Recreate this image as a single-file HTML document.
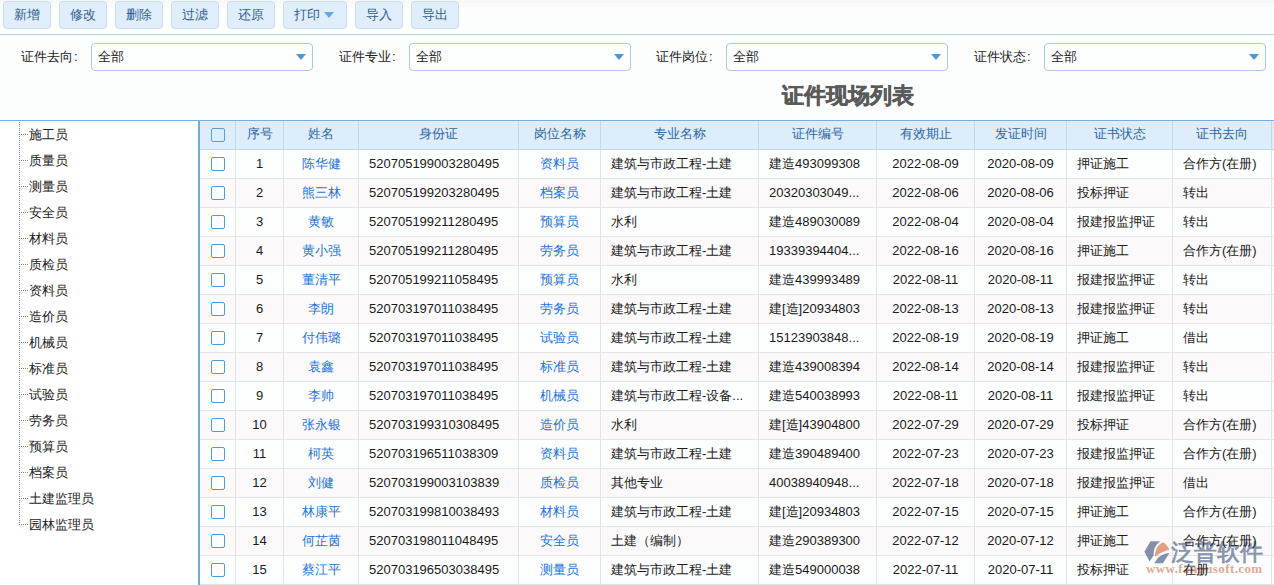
<!DOCTYPE html>
<html><head><meta charset="utf-8"><style>
*{box-sizing:border-box;margin:0;padding:0}
html,body{width:1274px;height:585px;overflow:hidden}
body{position:relative;background:#fcfdfd;font-family:"Liberation Sans",sans-serif;font-size:13px;color:#1a1a1a}
.a{position:absolute}
.topg{left:0;top:0;width:1274px;height:34px;background:linear-gradient(#f6f6f6 0px,#f6f6f6 3px,#f9f9f9 3px,#fafafa 7px,#fcfdfd 7px)}
.sep{left:0;top:34px;width:1274px;height:1px;background:#b2cfe6}
.btn{top:1px;height:28px;border:1px solid #c6dcef;border-radius:4px;background:#e0edfa;color:#2f5e8c;line-height:26px;text-align:center;white-space:nowrap}
.tri{display:inline-block;width:0;height:0;border-left:5px solid transparent;border-right:5px solid transparent;border-top:6px solid #6da6d9;vertical-align:middle;margin-left:4px;position:relative;top:-1px}
.lbl{top:43px;line-height:28px;color:#222;white-space:nowrap}
.sel{top:43px;width:222px;height:28px;border:1px solid #a9c9e6;border-radius:4px;background:#fdfefe;line-height:26px;padding-left:6px;color:#222}
.sel i{position:absolute;right:6px;top:10px;width:0;height:0;border-left:5px solid transparent;border-right:5px solid transparent;border-top:6px solid #4a97dc}
.title{left:782px;top:81px;font-size:22px;font-weight:bold;color:#5a5a5a;white-space:nowrap;line-height:30px;-webkit-text-stroke:0.5px #5a5a5a}
.tline{left:0;top:120px;width:1274px;height:1px;background:#72b0e4}
.tree{left:0;top:121px;width:198px;height:464px;background:#fff}
.vdot{left:19px;top:122px;width:1px;height:403px;background:repeating-linear-gradient(#8a8a8a 0 1px,transparent 1px 2px)}
.hdot{width:9px;height:1px;background:repeating-linear-gradient(90deg,#8a8a8a 0 1px,transparent 1px 2px)}
.ti{left:29px;line-height:16px;color:#222;white-space:nowrap}
.lb{left:198px;top:121px;width:2px;height:464px;background:#6aace4}
.hdr{left:200px;top:121px;width:1074px;height:28px;background:#deedfb}
.hb{left:200px;top:149px;width:1074px;height:1px;background:#c3d9ec}
.row{left:200px;width:1074px;height:28px;background:#fdfefe}
.row.e{background:#fbf9f9}
.hl{left:200px;width:1074px;height:1px;background:#e4e4e4}
.vl{width:1px}
.c{white-space:nowrap;overflow:hidden;line-height:27px;height:28px}
.h{color:#2d66a6;text-align:center}
.b{color:#1d74de}
.cb{width:14px;height:14px;border:1px solid #4e9ce0;border-radius:2px;background:#fdfefe}
.cbh{background:transparent;border-color:#5a9cd6}
</style></head><body>
<div class="a topg"></div>
<div class="a sep"></div>

<div class="a btn" style="left:3px;width:48px">新增</div>
<div class="a btn" style="left:59px;width:48px">修改</div>
<div class="a btn" style="left:115px;width:48px">删除</div>
<div class="a btn" style="left:171px;width:48px">过滤</div>
<div class="a btn" style="left:227px;width:48px">还原</div>
<div class="a btn" style="left:283px;width:64px;padding-right:3px">打印<span class="tri"></span></div>
<div class="a btn" style="left:355px;width:48px">导入</div>
<div class="a btn" style="left:411px;width:48px">导出</div>
<div class="a lbl" style="left:21px">证件去向<span style="margin-left:1px">:</span></div>
<div class="a sel" style="left:91px">全部<i></i></div>
<div class="a lbl" style="left:339px">证件专业<span style="margin-left:1px">:</span></div>
<div class="a sel" style="left:409px">全部<i></i></div>
<div class="a lbl" style="left:656px">证件岗位<span style="margin-left:1px">:</span></div>
<div class="a sel" style="left:726px">全部<i></i></div>
<div class="a lbl" style="left:974px">证件状态<span style="margin-left:1px">:</span></div>
<div class="a sel" style="left:1044px">全部<i></i></div>
<div class="a title">证件现场列表</div>
<div class="a tline"></div>
<div class="a tree"></div>
<div class="a vdot"></div>
<div class="a hdot" style="left:19px;top:134px"></div>
<div class="a ti" style="top:127px">施工员</div>
<div class="a hdot" style="left:19px;top:160px"></div>
<div class="a ti" style="top:153px">质量员</div>
<div class="a hdot" style="left:19px;top:186px"></div>
<div class="a ti" style="top:179px">测量员</div>
<div class="a hdot" style="left:19px;top:212px"></div>
<div class="a ti" style="top:205px">安全员</div>
<div class="a hdot" style="left:19px;top:238px"></div>
<div class="a ti" style="top:231px">材料员</div>
<div class="a hdot" style="left:19px;top:264px"></div>
<div class="a ti" style="top:257px">质检员</div>
<div class="a hdot" style="left:19px;top:290px"></div>
<div class="a ti" style="top:283px">资料员</div>
<div class="a hdot" style="left:19px;top:316px"></div>
<div class="a ti" style="top:309px">造价员</div>
<div class="a hdot" style="left:19px;top:342px"></div>
<div class="a ti" style="top:335px">机械员</div>
<div class="a hdot" style="left:19px;top:368px"></div>
<div class="a ti" style="top:361px">标准员</div>
<div class="a hdot" style="left:19px;top:394px"></div>
<div class="a ti" style="top:387px">试验员</div>
<div class="a hdot" style="left:19px;top:420px"></div>
<div class="a ti" style="top:413px">劳务员</div>
<div class="a hdot" style="left:19px;top:446px"></div>
<div class="a ti" style="top:439px">预算员</div>
<div class="a hdot" style="left:19px;top:472px"></div>
<div class="a ti" style="top:465px">档案员</div>
<div class="a hdot" style="left:19px;top:498px"></div>
<div class="a ti" style="top:491px">土建监理员</div>
<div class="a hdot" style="left:19px;top:524px"></div>
<div class="a ti" style="top:517px">园林监理员</div>
<div class="a hdr"></div>
<div class="a lb"></div>
<div class="a hb"></div>
<div class="a row" style="top:150px"></div>
<div class="a hl" style="top:178px"></div>
<div class="a row e" style="top:179px"></div>
<div class="a hl" style="top:207px"></div>
<div class="a row" style="top:208px"></div>
<div class="a hl" style="top:236px"></div>
<div class="a row e" style="top:237px"></div>
<div class="a hl" style="top:265px"></div>
<div class="a row" style="top:266px"></div>
<div class="a hl" style="top:294px"></div>
<div class="a row e" style="top:295px"></div>
<div class="a hl" style="top:323px"></div>
<div class="a row" style="top:324px"></div>
<div class="a hl" style="top:352px"></div>
<div class="a row e" style="top:353px"></div>
<div class="a hl" style="top:381px"></div>
<div class="a row" style="top:382px"></div>
<div class="a hl" style="top:410px"></div>
<div class="a row e" style="top:411px"></div>
<div class="a hl" style="top:439px"></div>
<div class="a row" style="top:440px"></div>
<div class="a hl" style="top:468px"></div>
<div class="a row e" style="top:469px"></div>
<div class="a hl" style="top:497px"></div>
<div class="a row" style="top:498px"></div>
<div class="a hl" style="top:526px"></div>
<div class="a row e" style="top:527px"></div>
<div class="a hl" style="top:555px"></div>
<div class="a row" style="top:556px"></div>
<div class="a hl" style="top:584px"></div>
<div class="a vl" style="left:235px;top:121px;height:28px;background:#c3d9ec"></div>
<div class="a vl" style="left:235px;top:150px;height:435px;background:#e4e4e4"></div>
<div class="a vl" style="left:283px;top:121px;height:28px;background:#c3d9ec"></div>
<div class="a vl" style="left:283px;top:150px;height:435px;background:#e4e4e4"></div>
<div class="a vl" style="left:358px;top:121px;height:28px;background:#c3d9ec"></div>
<div class="a vl" style="left:358px;top:150px;height:435px;background:#e4e4e4"></div>
<div class="a vl" style="left:518px;top:121px;height:28px;background:#c3d9ec"></div>
<div class="a vl" style="left:518px;top:150px;height:435px;background:#e4e4e4"></div>
<div class="a vl" style="left:600px;top:121px;height:28px;background:#c3d9ec"></div>
<div class="a vl" style="left:600px;top:150px;height:435px;background:#e4e4e4"></div>
<div class="a vl" style="left:758px;top:121px;height:28px;background:#c3d9ec"></div>
<div class="a vl" style="left:758px;top:150px;height:435px;background:#e4e4e4"></div>
<div class="a vl" style="left:876px;top:121px;height:28px;background:#c3d9ec"></div>
<div class="a vl" style="left:876px;top:150px;height:435px;background:#e4e4e4"></div>
<div class="a vl" style="left:974px;top:121px;height:28px;background:#c3d9ec"></div>
<div class="a vl" style="left:974px;top:150px;height:435px;background:#e4e4e4"></div>
<div class="a vl" style="left:1066px;top:121px;height:28px;background:#c3d9ec"></div>
<div class="a vl" style="left:1066px;top:150px;height:435px;background:#e4e4e4"></div>
<div class="a vl" style="left:1172px;top:121px;height:28px;background:#c3d9ec"></div>
<div class="a vl" style="left:1172px;top:150px;height:435px;background:#e4e4e4"></div>
<div class="a vl" style="left:1271px;top:121px;height:28px;background:#c3d9ec"></div>
<div class="a vl" style="left:1271px;top:150px;height:435px;background:#e4e4e4"></div>
<div class="a cb cbh" style="left:211px;top:128px"></div>
<div class="a c h" style="left:236px;top:120px;width:47px">序号</div>
<div class="a c h" style="left:284px;top:120px;width:74px">姓名</div>
<div class="a c h" style="left:359px;top:120px;width:159px">身份证</div>
<div class="a c h" style="left:519px;top:120px;width:81px">岗位名称</div>
<div class="a c h" style="left:601px;top:120px;width:157px">专业名称</div>
<div class="a c h" style="left:759px;top:120px;width:117px">证件编号</div>
<div class="a c h" style="left:877px;top:120px;width:97px">有效期止</div>
<div class="a c h" style="left:975px;top:120px;width:91px">发证时间</div>
<div class="a c h" style="left:1067px;top:120px;width:105px">证书状态</div>
<div class="a c h" style="left:1173px;top:120px;width:98px">证书去向</div>
<svg class="a" style="left:1138px;top:536px" width="136" height="49" viewBox="0 0 136 49">
<path d="M6.4,15.7 L12.5,5.2 L22.1,5.2 C17.4,8.7 15.1,14.5 15.7,19.2 L11.6,25.6 Z" fill="#6d7d9e" fill-opacity="0.85"/>
<path d="M16.9,20.9 C16.9,14.5 19.2,8.1 25.6,6.4 C28.5,8.7 30.8,11.6 31.4,14 C26.2,14.5 20.3,18 16.9,20.9 Z" fill="#da926e" fill-opacity="0.85"/>
<path d="M16.3,27.3 L25,27.3 L31.4,16.9 C26.2,17.4 21.5,19.8 19.2,22.7 Z" fill="#6d7d9e" fill-opacity="0.85"/>
</svg>
<div class="a" style="left:1171px;top:536px;font-size:23px;line-height:32px;color:#8693ad;white-space:nowrap;-webkit-text-stroke:0.7px #8693ad">泛普软件</div>
<div class="a" style="left:1146px;top:561px;font-family:'Liberation Serif',serif;font-size:13px;font-weight:bold;line-height:16px;color:#e3a994;white-space:nowrap;letter-spacing:0.4px">www.fanpusoft.com</div>
<div class="a cb" style="left:211px;top:157px"></div>
<div class="a c" style="left:236px;top:150px;width:47px;text-align:center;">1</div>
<div class="a c b" style="left:284px;top:150px;width:74px;text-align:center;">陈华健</div>
<div class="a c" style="left:359px;top:150px;width:159px;padding-left:10px;">520705199003280495</div>
<div class="a c b" style="left:519px;top:150px;width:81px;text-align:center;">资料员</div>
<div class="a c" style="left:601px;top:150px;width:157px;padding-left:10px;">建筑与市政工程-土建</div>
<div class="a c" style="left:759px;top:150px;width:117px;padding-left:10px;">建造493099308</div>
<div class="a c" style="left:877px;top:150px;width:97px;text-align:center;">2022-08-09</div>
<div class="a c" style="left:975px;top:150px;width:91px;text-align:center;">2020-08-09</div>
<div class="a c" style="left:1067px;top:150px;width:105px;padding-left:10px;">押证施工</div>
<div class="a c" style="left:1173px;top:150px;width:98px;padding-left:10px;">合作方(在册)</div>
<div class="a cb" style="left:211px;top:186px"></div>
<div class="a c" style="left:236px;top:179px;width:47px;text-align:center;">2</div>
<div class="a c b" style="left:284px;top:179px;width:74px;text-align:center;">熊三林</div>
<div class="a c" style="left:359px;top:179px;width:159px;padding-left:10px;">520705199203280495</div>
<div class="a c b" style="left:519px;top:179px;width:81px;text-align:center;">档案员</div>
<div class="a c" style="left:601px;top:179px;width:157px;padding-left:10px;">建筑与市政工程-土建</div>
<div class="a c" style="left:759px;top:179px;width:117px;padding-left:10px;">20320303049...</div>
<div class="a c" style="left:877px;top:179px;width:97px;text-align:center;">2022-08-06</div>
<div class="a c" style="left:975px;top:179px;width:91px;text-align:center;">2020-08-06</div>
<div class="a c" style="left:1067px;top:179px;width:105px;padding-left:10px;">投标押证</div>
<div class="a c" style="left:1173px;top:179px;width:98px;padding-left:10px;">转出</div>
<div class="a cb" style="left:211px;top:215px"></div>
<div class="a c" style="left:236px;top:208px;width:47px;text-align:center;">3</div>
<div class="a c b" style="left:284px;top:208px;width:74px;text-align:center;">黄敏</div>
<div class="a c" style="left:359px;top:208px;width:159px;padding-left:10px;">520705199211280495</div>
<div class="a c b" style="left:519px;top:208px;width:81px;text-align:center;">预算员</div>
<div class="a c" style="left:601px;top:208px;width:157px;padding-left:10px;">水利</div>
<div class="a c" style="left:759px;top:208px;width:117px;padding-left:10px;">建造489030089</div>
<div class="a c" style="left:877px;top:208px;width:97px;text-align:center;">2022-08-04</div>
<div class="a c" style="left:975px;top:208px;width:91px;text-align:center;">2020-08-04</div>
<div class="a c" style="left:1067px;top:208px;width:105px;padding-left:10px;">报建报监押证</div>
<div class="a c" style="left:1173px;top:208px;width:98px;padding-left:10px;">转出</div>
<div class="a cb" style="left:211px;top:244px"></div>
<div class="a c" style="left:236px;top:237px;width:47px;text-align:center;">4</div>
<div class="a c b" style="left:284px;top:237px;width:74px;text-align:center;">黄小强</div>
<div class="a c" style="left:359px;top:237px;width:159px;padding-left:10px;">520705199211280495</div>
<div class="a c b" style="left:519px;top:237px;width:81px;text-align:center;">劳务员</div>
<div class="a c" style="left:601px;top:237px;width:157px;padding-left:10px;">建筑与市政工程-土建</div>
<div class="a c" style="left:759px;top:237px;width:117px;padding-left:10px;">19339394404...</div>
<div class="a c" style="left:877px;top:237px;width:97px;text-align:center;">2022-08-16</div>
<div class="a c" style="left:975px;top:237px;width:91px;text-align:center;">2020-08-16</div>
<div class="a c" style="left:1067px;top:237px;width:105px;padding-left:10px;">押证施工</div>
<div class="a c" style="left:1173px;top:237px;width:98px;padding-left:10px;">合作方(在册)</div>
<div class="a cb" style="left:211px;top:273px"></div>
<div class="a c" style="left:236px;top:266px;width:47px;text-align:center;">5</div>
<div class="a c b" style="left:284px;top:266px;width:74px;text-align:center;">董清平</div>
<div class="a c" style="left:359px;top:266px;width:159px;padding-left:10px;">520705199211058495</div>
<div class="a c b" style="left:519px;top:266px;width:81px;text-align:center;">预算员</div>
<div class="a c" style="left:601px;top:266px;width:157px;padding-left:10px;">水利</div>
<div class="a c" style="left:759px;top:266px;width:117px;padding-left:10px;">建造439993489</div>
<div class="a c" style="left:877px;top:266px;width:97px;text-align:center;">2022-08-11</div>
<div class="a c" style="left:975px;top:266px;width:91px;text-align:center;">2020-08-11</div>
<div class="a c" style="left:1067px;top:266px;width:105px;padding-left:10px;">报建报监押证</div>
<div class="a c" style="left:1173px;top:266px;width:98px;padding-left:10px;">转出</div>
<div class="a cb" style="left:211px;top:302px"></div>
<div class="a c" style="left:236px;top:295px;width:47px;text-align:center;">6</div>
<div class="a c b" style="left:284px;top:295px;width:74px;text-align:center;">李朗</div>
<div class="a c" style="left:359px;top:295px;width:159px;padding-left:10px;">520703197011038495</div>
<div class="a c b" style="left:519px;top:295px;width:81px;text-align:center;">劳务员</div>
<div class="a c" style="left:601px;top:295px;width:157px;padding-left:10px;">建筑与市政工程-土建</div>
<div class="a c" style="left:759px;top:295px;width:117px;padding-left:10px;">建[造]20934803</div>
<div class="a c" style="left:877px;top:295px;width:97px;text-align:center;">2022-08-13</div>
<div class="a c" style="left:975px;top:295px;width:91px;text-align:center;">2020-08-13</div>
<div class="a c" style="left:1067px;top:295px;width:105px;padding-left:10px;">报建报监押证</div>
<div class="a c" style="left:1173px;top:295px;width:98px;padding-left:10px;">转出</div>
<div class="a cb" style="left:211px;top:331px"></div>
<div class="a c" style="left:236px;top:324px;width:47px;text-align:center;">7</div>
<div class="a c b" style="left:284px;top:324px;width:74px;text-align:center;">付伟璐</div>
<div class="a c" style="left:359px;top:324px;width:159px;padding-left:10px;">520703197011038495</div>
<div class="a c b" style="left:519px;top:324px;width:81px;text-align:center;">试验员</div>
<div class="a c" style="left:601px;top:324px;width:157px;padding-left:10px;">建筑与市政工程-土建</div>
<div class="a c" style="left:759px;top:324px;width:117px;padding-left:10px;">15123903848...</div>
<div class="a c" style="left:877px;top:324px;width:97px;text-align:center;">2022-08-19</div>
<div class="a c" style="left:975px;top:324px;width:91px;text-align:center;">2020-08-19</div>
<div class="a c" style="left:1067px;top:324px;width:105px;padding-left:10px;">押证施工</div>
<div class="a c" style="left:1173px;top:324px;width:98px;padding-left:10px;">借出</div>
<div class="a cb" style="left:211px;top:360px"></div>
<div class="a c" style="left:236px;top:353px;width:47px;text-align:center;">8</div>
<div class="a c b" style="left:284px;top:353px;width:74px;text-align:center;">袁鑫</div>
<div class="a c" style="left:359px;top:353px;width:159px;padding-left:10px;">520703197011038495</div>
<div class="a c b" style="left:519px;top:353px;width:81px;text-align:center;">标准员</div>
<div class="a c" style="left:601px;top:353px;width:157px;padding-left:10px;">建筑与市政工程-土建</div>
<div class="a c" style="left:759px;top:353px;width:117px;padding-left:10px;">建造439008394</div>
<div class="a c" style="left:877px;top:353px;width:97px;text-align:center;">2022-08-14</div>
<div class="a c" style="left:975px;top:353px;width:91px;text-align:center;">2020-08-14</div>
<div class="a c" style="left:1067px;top:353px;width:105px;padding-left:10px;">报建报监押证</div>
<div class="a c" style="left:1173px;top:353px;width:98px;padding-left:10px;">转出</div>
<div class="a cb" style="left:211px;top:389px"></div>
<div class="a c" style="left:236px;top:382px;width:47px;text-align:center;">9</div>
<div class="a c b" style="left:284px;top:382px;width:74px;text-align:center;">李帅</div>
<div class="a c" style="left:359px;top:382px;width:159px;padding-left:10px;">520703197011038495</div>
<div class="a c b" style="left:519px;top:382px;width:81px;text-align:center;">机械员</div>
<div class="a c" style="left:601px;top:382px;width:157px;padding-left:10px;">建筑与市政工程-设备...</div>
<div class="a c" style="left:759px;top:382px;width:117px;padding-left:10px;">建造540038993</div>
<div class="a c" style="left:877px;top:382px;width:97px;text-align:center;">2022-08-11</div>
<div class="a c" style="left:975px;top:382px;width:91px;text-align:center;">2020-08-11</div>
<div class="a c" style="left:1067px;top:382px;width:105px;padding-left:10px;">报建报监押证</div>
<div class="a c" style="left:1173px;top:382px;width:98px;padding-left:10px;">转出</div>
<div class="a cb" style="left:211px;top:418px"></div>
<div class="a c" style="left:236px;top:411px;width:47px;text-align:center;">10</div>
<div class="a c b" style="left:284px;top:411px;width:74px;text-align:center;">张永银</div>
<div class="a c" style="left:359px;top:411px;width:159px;padding-left:10px;">520703199310308495</div>
<div class="a c b" style="left:519px;top:411px;width:81px;text-align:center;">造价员</div>
<div class="a c" style="left:601px;top:411px;width:157px;padding-left:10px;">水利</div>
<div class="a c" style="left:759px;top:411px;width:117px;padding-left:10px;">建[造]43904800</div>
<div class="a c" style="left:877px;top:411px;width:97px;text-align:center;">2022-07-29</div>
<div class="a c" style="left:975px;top:411px;width:91px;text-align:center;">2020-07-29</div>
<div class="a c" style="left:1067px;top:411px;width:105px;padding-left:10px;">投标押证</div>
<div class="a c" style="left:1173px;top:411px;width:98px;padding-left:10px;">合作方(在册)</div>
<div class="a cb" style="left:211px;top:447px"></div>
<div class="a c" style="left:236px;top:440px;width:47px;text-align:center;">11</div>
<div class="a c b" style="left:284px;top:440px;width:74px;text-align:center;">柯英</div>
<div class="a c" style="left:359px;top:440px;width:159px;padding-left:10px;">520703196511038309</div>
<div class="a c b" style="left:519px;top:440px;width:81px;text-align:center;">资料员</div>
<div class="a c" style="left:601px;top:440px;width:157px;padding-left:10px;">建筑与市政工程-土建</div>
<div class="a c" style="left:759px;top:440px;width:117px;padding-left:10px;">建造390489400</div>
<div class="a c" style="left:877px;top:440px;width:97px;text-align:center;">2022-07-23</div>
<div class="a c" style="left:975px;top:440px;width:91px;text-align:center;">2020-07-23</div>
<div class="a c" style="left:1067px;top:440px;width:105px;padding-left:10px;">报建报监押证</div>
<div class="a c" style="left:1173px;top:440px;width:98px;padding-left:10px;">合作方(在册)</div>
<div class="a cb" style="left:211px;top:476px"></div>
<div class="a c" style="left:236px;top:469px;width:47px;text-align:center;">12</div>
<div class="a c b" style="left:284px;top:469px;width:74px;text-align:center;">刘健</div>
<div class="a c" style="left:359px;top:469px;width:159px;padding-left:10px;">520703199003103839</div>
<div class="a c b" style="left:519px;top:469px;width:81px;text-align:center;">质检员</div>
<div class="a c" style="left:601px;top:469px;width:157px;padding-left:10px;">其他专业</div>
<div class="a c" style="left:759px;top:469px;width:117px;padding-left:10px;">40038940948...</div>
<div class="a c" style="left:877px;top:469px;width:97px;text-align:center;">2022-07-18</div>
<div class="a c" style="left:975px;top:469px;width:91px;text-align:center;">2020-07-18</div>
<div class="a c" style="left:1067px;top:469px;width:105px;padding-left:10px;">报建报监押证</div>
<div class="a c" style="left:1173px;top:469px;width:98px;padding-left:10px;">借出</div>
<div class="a cb" style="left:211px;top:505px"></div>
<div class="a c" style="left:236px;top:498px;width:47px;text-align:center;">13</div>
<div class="a c b" style="left:284px;top:498px;width:74px;text-align:center;">林康平</div>
<div class="a c" style="left:359px;top:498px;width:159px;padding-left:10px;">520703199810038493</div>
<div class="a c b" style="left:519px;top:498px;width:81px;text-align:center;">材料员</div>
<div class="a c" style="left:601px;top:498px;width:157px;padding-left:10px;">建筑与市政工程-土建</div>
<div class="a c" style="left:759px;top:498px;width:117px;padding-left:10px;">建[造]20934803</div>
<div class="a c" style="left:877px;top:498px;width:97px;text-align:center;">2022-07-15</div>
<div class="a c" style="left:975px;top:498px;width:91px;text-align:center;">2020-07-15</div>
<div class="a c" style="left:1067px;top:498px;width:105px;padding-left:10px;">押证施工</div>
<div class="a c" style="left:1173px;top:498px;width:98px;padding-left:10px;">合作方(在册)</div>
<div class="a cb" style="left:211px;top:534px"></div>
<div class="a c" style="left:236px;top:527px;width:47px;text-align:center;">14</div>
<div class="a c b" style="left:284px;top:527px;width:74px;text-align:center;">何芷茵</div>
<div class="a c" style="left:359px;top:527px;width:159px;padding-left:10px;">520703198011048495</div>
<div class="a c b" style="left:519px;top:527px;width:81px;text-align:center;">安全员</div>
<div class="a c" style="left:601px;top:527px;width:157px;padding-left:10px;">土建（编制）</div>
<div class="a c" style="left:759px;top:527px;width:117px;padding-left:10px;">建造290389300</div>
<div class="a c" style="left:877px;top:527px;width:97px;text-align:center;">2022-07-12</div>
<div class="a c" style="left:975px;top:527px;width:91px;text-align:center;">2020-07-12</div>
<div class="a c" style="left:1067px;top:527px;width:105px;padding-left:10px;">押证施工</div>
<div class="a c" style="left:1173px;top:527px;width:98px;padding-left:10px;">合作方(在册)</div>
<div class="a cb" style="left:211px;top:563px"></div>
<div class="a c" style="left:236px;top:556px;width:47px;text-align:center;">15</div>
<div class="a c b" style="left:284px;top:556px;width:74px;text-align:center;">蔡江平</div>
<div class="a c" style="left:359px;top:556px;width:159px;padding-left:10px;">520703196503038495</div>
<div class="a c b" style="left:519px;top:556px;width:81px;text-align:center;">测量员</div>
<div class="a c" style="left:601px;top:556px;width:157px;padding-left:10px;">建筑与市政工程-土建</div>
<div class="a c" style="left:759px;top:556px;width:117px;padding-left:10px;">建造549000038</div>
<div class="a c" style="left:877px;top:556px;width:97px;text-align:center;">2022-07-11</div>
<div class="a c" style="left:975px;top:556px;width:91px;text-align:center;">2020-07-11</div>
<div class="a c" style="left:1067px;top:556px;width:105px;padding-left:10px;">投标押证</div>
<div class="a c" style="left:1173px;top:556px;width:98px;padding-left:10px;">在册</div>
</body></html>
